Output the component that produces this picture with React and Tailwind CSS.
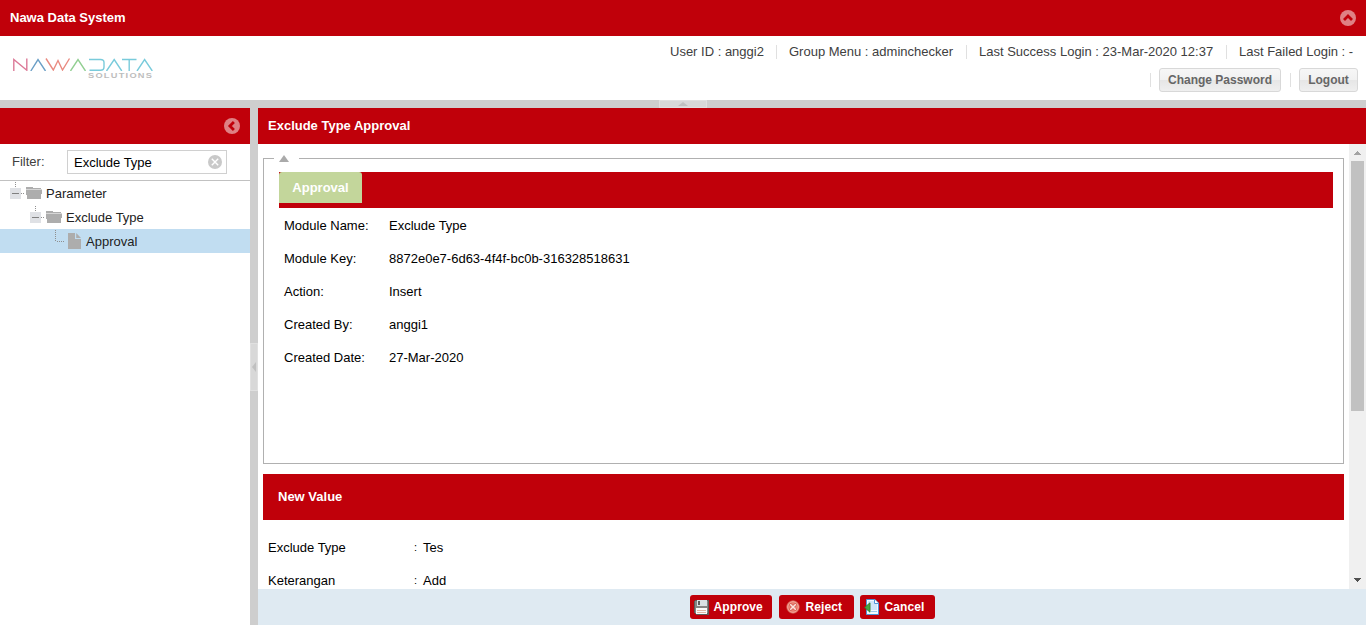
import React from 'react';

function CircleChevron({ d }) {
  return (
    <svg width="16" height="16" viewBox="0 0 16 16" className="block shrink-0">
      <circle cx="8" cy="8" r="8" fill="#df8084" />
      <path d={d} fill="none" stroke="#c0000a" strokeWidth="2.8" />
    </svg>
  );
}

function Logo() {
  return (
    <div className="relative ml-3 mt-[21px] h-[24px] w-[142px]">
      <svg width="142" height="14" viewBox="0 0 142 14" className="block" fill="none" strokeWidth="1.4">
        <path d="M1.8 14V2.4L14.8 13.2V1.5" stroke="#dc7a98" />
        <path d="M18.8 14L26 2.6L33.5 14" stroke="#6b9fc6" />
        <path d="M34 1.5L41.3 13L46 3.5L50.5 13L57.5 1.5" stroke="#e98a80" />
        <path d="M58.5 14L66 2.6L73.5 14" stroke="#92cf92" />
        <path d="M77 2.5H88.5Q92 2.5 92 5.5V10Q92 13.2 88.5 13.2H77.5" stroke="#79cbdb" />
        <path d="M94.5 14L102.2 2.6L109.8 14" stroke="#79cbdb" />
        <path d="M110 2.5H124.5M117.2 2.5V14" stroke="#79cbdb" />
        <path d="M125 14L132.6 2.6L140.3 14" stroke="#79cbdb" />
      </svg>
      <div className="absolute left-[76px] top-[14px] w-[66px] origin-left scale-x-[1.32] whitespace-nowrap text-[7px] font-bold leading-[9px] tracking-[0.95px] text-[#bdbdbd]">
        SOLUTIONS
      </div>
    </div>
  );
}

function Separator() {
  return <div className="h-[14px] w-px shrink-0 bg-[#e0e0e0]" />;
}

function GrayButton({ className, children }) {
  return (
    <button className={`flex h-[24px] items-center justify-center rounded-[3px] border border-[#d8d8d8] bg-[linear-gradient(#f6f6f6,#f1f1f1_50%,#e6e6e6_51%,#efefef)] text-[12px] font-bold text-[#666666] ${className}`}>
      <span className="whitespace-nowrap">{children}</span>
    </button>
  );
}

function ActionButton({ icon, className, children }) {
  return (
    <button className={`flex h-[24px] items-center rounded-[3px] bg-[#c0000a] pl-1 text-[12px] font-bold text-white ${className}`}>
      {icon}
      <span className="whitespace-nowrap">{children}</span>
    </button>
  );
}

function SaveIcon() {
  return (
    <svg width="16" height="16" viewBox="0 0 16 16" shapeRendering="crispEdges" className="mr-1">
      <path d="M1 1H15V16H2L0 14V2Z" fill="#5c5c5c" />
      <rect x="1" y="2" width="13" height="12" fill="#858585" />
      <rect x="3" y="1" width="10" height="6" fill="#d9e0e4" />
      <rect x="4" y="2" width="2" height="4" fill="#5c5c5c" />
      <rect x="2" y="9" width="11" height="6" fill="#fafafa" />
      <rect x="3" y="11" width="9" height="1" fill="#e0b5a5" />
      <rect x="3" y="13" width="9" height="1" fill="#e0b5a5" />
    </svg>
  );
}

function RejectIcon() {
  return (
    <svg width="16" height="16" viewBox="0 0 16 16" className="mr-[5px]">
      <circle cx="8" cy="8" r="6.2" fill="#e98072" stroke="#d4594e" />
      <circle cx="8" cy="8" r="5.4" fill="none" stroke="#f5b2a6" strokeWidth="0.8" />
      <path d="M5.7 5.7L10.3 10.3M10.3 5.7L5.7 10.3" stroke="#d4594e" strokeWidth="3" strokeLinecap="round" />
      <path d="M5.7 5.7L10.3 10.3M10.3 5.7L5.7 10.3" stroke="#fbe4df" strokeWidth="1.6" strokeLinecap="round" />
    </svg>
  );
}

function CancelIcon() {
  return (
    <svg width="16" height="16" viewBox="0 0 16 16" className="mr-[5px]">
      <path d="M2.5 0.5H11L14.5 4V15.5H2.5Z" fill="#f4faff" stroke="#4f95d8" />
      <path d="M4 2H10V5H13V11H4Z" fill="#cfe6fa" />
      <path d="M10.5 0.5V4.5H14.5" fill="#ffffff" stroke="#4f95d8" />
      <path d="M7 12.5H13" stroke="#9cc8ee" />
      <path d="M0.6 8.5L6 3.8V13.2Z" fill="#4aa544" stroke="#2c7f2c" strokeWidth="0.9" />
    </svg>
  );
}

function Expander() {
  return (
    <svg width="16" height="24" viewBox="0 0 16 24" className="block shrink-0" shapeRendering="crispEdges">
      <path d="M5.5 1V7" stroke="#8f8f8f" strokeDasharray="1 1" />
      <rect x="0" y="7" width="11" height="11" fill="#dfe1e5" />
      <path d="M2 12.5H9" stroke="#808080" />
      <path d="M11 12.5H14" stroke="#8f8f8f" strokeDasharray="1 1" />
    </svg>
  );
}

function FolderIcon() {
  return (
    <svg width="16" height="12" viewBox="0 0 16 12" className="block shrink-0" shapeRendering="crispEdges">
      <path d="M0 0H6L8 1H15V3H0Z" fill="#adadad" />
      <path d="M0 3H16L15 12H1Z" fill="#adadad" />
      <path d="M0 2.5H16" stroke="#d6d6d6" />
    </svg>
  );
}

function FieldRow({ label, value }) {
  return (
    <div className="flex h-[33px] items-start">
      <div className="w-[105px]">{label}</div>
      <div>{value}</div>
    </div>
  );
}

function ValueRow({ label, value }) {
  return (
    <div className="flex h-[33px]">
      <div className="w-[146px]">{label}</div>
      <div className="w-[9px] text-[11px] leading-[15px]">:</div>
      <div>{value}</div>
    </div>
  );
}

const fields = [
  ['Module Name:', 'Exclude Type'],
  ['Module Key:', '8872e0e7-6d63-4f4f-bc0b-316328518631'],
  ['Action:', 'Insert'],
  ['Created By:', 'anggi1'],
  ['Created Date:', '27-Mar-2020'],
];

function Sidebar() {
  return (
    <aside className="flex w-[250px] shrink-0 flex-col bg-white">
      <div className="flex h-[36px] items-center justify-end bg-[#c0000a] pr-[10px]">
        <CircleChevron d="M9.9 4L5.9 8L9.9 12" />
      </div>
      <div className="flex h-[37px] items-start border-b border-[#c1c1c1] pl-3 pt-[6px]">
        <div className="w-[55px] leading-[24px] text-[#404040]">Filter:</div>
        <div className="flex h-[24px] w-[160px] items-center justify-between border border-[#d0d0d0] pl-[6px] pr-1 text-black">
          <span className="pt-px">Exclude Type</span>
          <svg width="14" height="14" viewBox="0 0 14 14">
            <circle cx="7" cy="7" r="7" fill="#c9c9c9" />
            <path d="M3.8 3.8L10.2 10.2M10.2 3.8L3.8 10.2" stroke="#ffffff" strokeWidth="1.4" />
          </svg>
        </div>
      </div>
      <div className="text-[#222222]">
        <div className="flex h-[24px] items-center pl-[10px]">
          <Expander />
          <FolderIcon />
          <span className="ml-1 pt-[2px]">Parameter</span>
        </div>
        <div className="flex h-[24px] items-center pl-[30px]">
          <Expander />
          <FolderIcon />
          <span className="ml-1 pt-[2px]">Exclude Type</span>
        </div>
        <div className="flex h-[24px] items-center bg-[#c1ddf1] pl-[55px]">
          <svg width="13" height="24" viewBox="0 0 13 24" className="block" shapeRendering="crispEdges">
            <path d="M0.5 1V13M2 12.5H9" stroke="#8f8f8f" strokeDasharray="1 1" fill="none" />
          </svg>
          <svg width="13" height="16" viewBox="0 0 13 16" className="block">
            <path d="M0 0H7V6H13V16H0Z" fill="#adadad" />
            <path d="M8.2 0L13 5H8.2Z" fill="#adadad" />
          </svg>
          <span className="ml-[5px] pt-[2px]">Approval</span>
        </div>
      </div>
    </aside>
  );
}

function Scrollbar() {
  return (
    <div className="flex w-[17px] shrink-0 flex-col items-center bg-[#f0f0f0]">
      <svg width="17" height="17" viewBox="0 0 17 17" className="block shrink-0" shapeRendering="crispEdges">
        <path d="M8 7H9V8H10V9H11V10H12V11H5V10H6V9H7V8H8Z" fill="#a3a3a3" />
      </svg>
      <div className="h-[250px] w-[13px] bg-[#c1c1c1]" />
      <svg width="17" height="17" viewBox="0 0 17 17" className="mt-auto block shrink-0" shapeRendering="crispEdges">
        <path d="M5 6H12V7H11V8H10V9H9V10H8V9H7V8H6V7H5Z" fill="#505050" />
      </svg>
    </div>
  );
}

function ApprovalFieldset() {
  return (
    <section className="relative h-[306px] w-[1081px] border border-[#b0b0b0] px-[15px] pt-[13px]">
      <div className="absolute -top-[5px] left-[10px] flex h-[9px] w-[25px] justify-center bg-white">
        <svg width="10" height="7" viewBox="0 0 10 7" className="mr-[5px] mt-[1px]">
          <path d="M5 0L10 7H0Z" fill="#aaaaaa" />
        </svg>
      </div>
      <div className="h-[36px] w-[1054px] bg-[#c0000a]">
        <div className="h-[31px] w-[83px] rounded-t-[3px] bg-[#c3d69b] text-center font-bold leading-[31px] text-white">
          Approval
        </div>
      </div>
      <div className="pl-[5px] pt-[10px] leading-[16px]">
        {fields.map(([label, value]) => (
          <FieldRow key={label} label={label} value={value} />
        ))}
      </div>
    </section>
  );
}

export default function App() {
  return (
    <div className="flex h-[625px] w-[1366px] flex-col overflow-hidden bg-[#cecece] font-['Liberation_Sans',Arial,sans-serif] text-[13px] leading-[16px] text-black">
      <header className="flex h-[36px] shrink-0 items-center justify-between bg-[#c0000a] pl-[10px] pr-[10px] font-bold text-white">
        <span>Nawa Data System</span>
        <CircleChevron d="M4 9.9L8 5.9L12 9.9" />
      </header>
      <div className="flex h-[64px] shrink-0 justify-between bg-white">
        <Logo />
        <div className="flex w-[696px] flex-col text-[#404040]">
          <div className="mt-[7px] flex h-[17px] items-center whitespace-nowrap">
            <span className="w-[106px]">User ID : anggi2</span>
            <Separator />
            <span className="w-[189px] pl-3">Group Menu : adminchecker</span>
            <Separator />
            <span className="w-[259px] pl-3">Last Success Login : 23-Mar-2020 12:37</span>
            <Separator />
            <span className="pl-3">Last Failed Login : -</span>
          </div>
          <div className="mt-2 flex h-[24px] items-center justify-end pr-2">
            <Separator />
            <GrayButton className="ml-2 mr-[9px] w-[122px]">Change Password</GrayButton>
            <Separator />
            <GrayButton className="ml-2 w-[59px]">Logout</GrayButton>
          </div>
        </div>
      </div>
      <div className="flex h-[8px] shrink-0 justify-center">
        <div className="flex h-[8px] w-[48px] items-center justify-center border border-[#e0e0e0] bg-[#d8d8d8]">
          <svg width="10" height="4" viewBox="0 0 10 4">
            <path d="M5 0L10 4H0Z" fill="#c0c0c0" />
          </svg>
        </div>
      </div>
      <div className="flex min-h-0 flex-1">
        <Sidebar />
        <div className="flex w-[8px] shrink-0 flex-col justify-center">
          <div className="flex h-[48px] items-center justify-center border border-[#e0e0e0] bg-[#d8d8d8]">
            <svg width="4" height="10" viewBox="0 0 4 10">
              <path d="M0 5L4 0V10Z" fill="#c0c0c0" />
            </svg>
          </div>
        </div>
        <main className="flex min-w-0 flex-1 flex-col bg-white">
          <h1 className="h-[36px] shrink-0 bg-[#c0000a] pl-[10px] font-bold leading-[35px] text-white">Exclude Type Approval</h1>
          <div className="flex h-[445px] shrink-0">
            <div className="min-w-0 flex-1 overflow-hidden pl-[5px] pt-[14px]">
              <ApprovalFieldset />
              <h2 className="mt-[10px] h-[46px] w-[1081px] bg-[#c0000a] pl-[15px] font-bold leading-[45px] text-white">New Value</h2>
              <div className="pl-[5px] pt-5">
                <ValueRow label="Exclude Type" value="Tes" />
                <ValueRow label="Keterangan" value="Add" />
              </div>
            </div>
            <Scrollbar />
          </div>
          <footer className="flex flex-1 items-center justify-center bg-[#dfeaf2]">
            <div className="flex">
              <ActionButton icon={<SaveIcon />} className="w-[82px] tracking-[0.1px]">Approve</ActionButton>
              <ActionButton icon={<RejectIcon />} className="ml-[7px] w-[75px] pl-[6px] tracking-[0.1px]">Reject</ActionButton>
              <ActionButton icon={<CancelIcon />} className="ml-[6px] w-[75px] tracking-[0.1px]">Cancel</ActionButton>
            </div>
          </footer>
        </main>
      </div>
    </div>
  );
}
